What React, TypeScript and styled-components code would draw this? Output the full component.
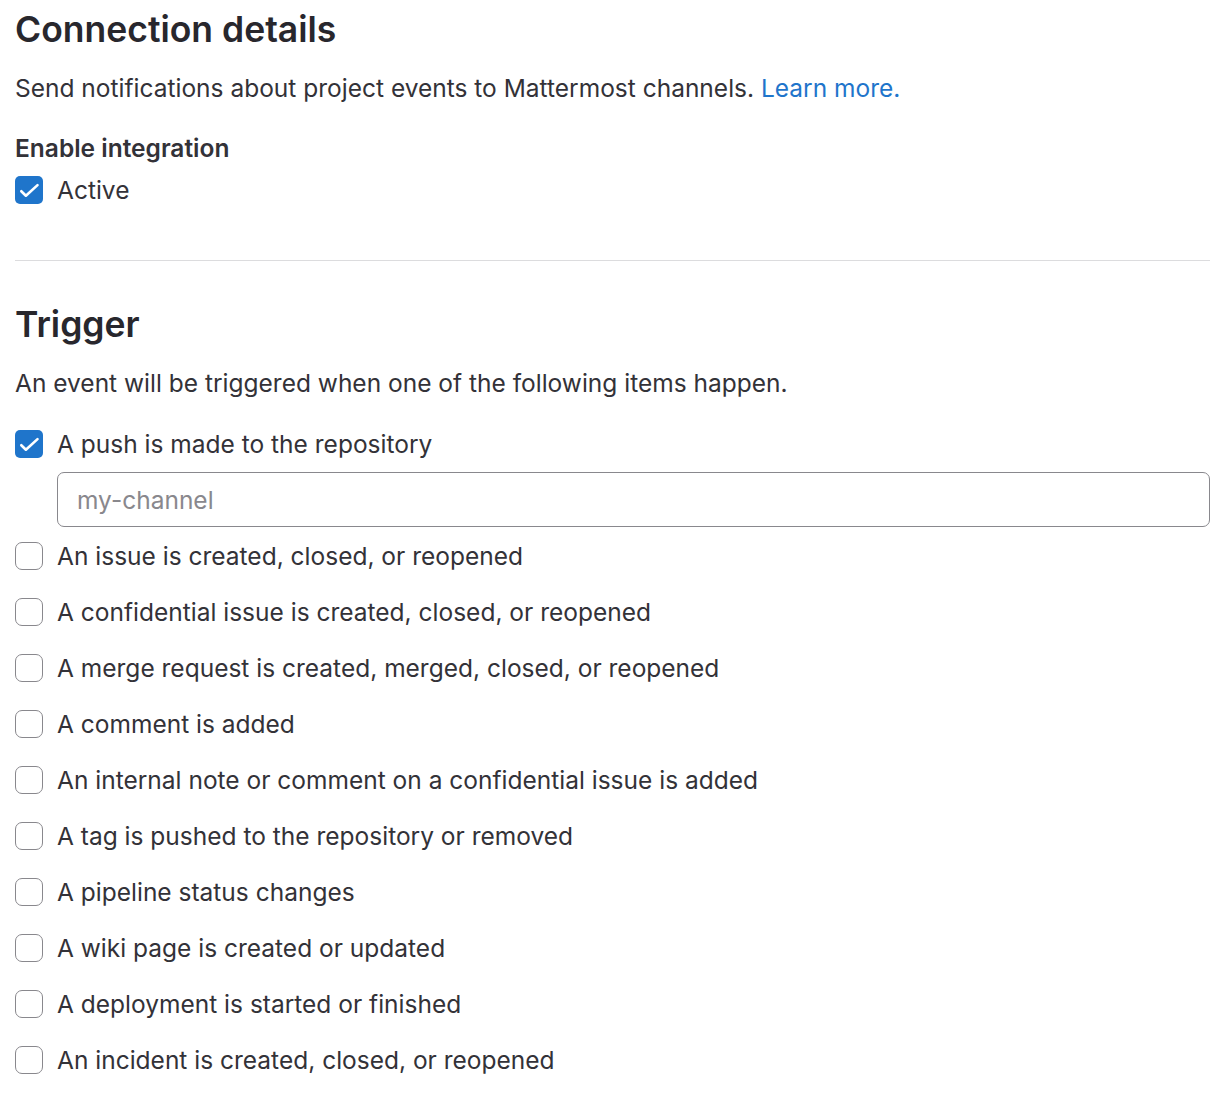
import React, {useState} from 'react'
import styled, {createGlobalStyle} from 'styled-components'

const Global = createGlobalStyle`
body {
    margin: 0;
    background: #ffffff;
    font-family: Inter, "Noto Sans", "Liberation Sans", sans-serif;
    color: #333238;
}
`

const triggers = [
    'An issue is created, closed, or reopened',
    'A confidential issue is created, closed, or reopened',
    'A merge request is created, merged, closed, or reopened',
    'A comment is added',
    'An internal note or comment on a confidential issue is added',
    'A tag is pushed to the repository or removed',
    'A pipeline status changes',
    'A wiki page is created or updated',
    'A deployment is started or finished',
    'An incident is created, closed, or reopened',
]

const Check = ({checked}: {checked: boolean}) => (
    <Box $checked={checked}>
        {checked && (
            <svg width="28" height="28" viewBox="0 0 28 28">
                <path d="M6.3 15.2l4.6 4.5 11.6-10.6" fill="none" stroke="#fff" strokeWidth="2.6" strokeLinecap="round" strokeLinejoin="round" />
            </svg>
        )}
    </Box>
)

const CheckRow = ({label, initial}: {label: string, initial?: boolean}) => {
    const [on, setOn] = useState(!!initial)
    return (
        <Row onClick={() => setOn(!on)}>
            <Check checked={on} />
            <Label>{label}</Label>
        </Row>
    )
}

const App = () => {
    const [channel, setChannel] = useState('')

    return (
        <Page>
            <Global />
            <Heading>Connection details</Heading>
            <Text>
                Send notifications about project events to Mattermost channels. <Link href="#">Learn more.</Link>
            </Text>
            <GroupLabel>Enable integration</GroupLabel>
            <CheckRow label="Active" initial />
            <Divider />
            <Heading $top={41}>Trigger</Heading>
            <Text>An event will be triggered when one of the following items happen.</Text>
            <List>
                <CheckRow label="A push is made to the repository" initial />
                <Input value={channel} onChange={(e) => setChannel(e.target.value)} placeholder="my-channel" />
                {triggers.map((t) => (
                    <CheckRow key={t} label={t} />
                ))}
            </List>
        </Page>
    )
}

export default App

const Page = styled.div`
padding: 7px 17px 20px 15px;
`

const Heading = styled.h2<{$top?: number}>`
margin: ${(p) => p.$top || 0}px 0 0 0;
font-size: 35.5px;
line-height: 45px;
font-weight: 600;
color: #28272d;
`

const Text = styled.p`
margin: 18px 0 0 0;
font-size: 24.5px;
line-height: 36.75px;
`

const Link = styled.a`
color: #1f75cb;
text-decoration: none;
`

const GroupLabel = styled.div`
margin-top: 23px;
font-size: 24.5px;
line-height: 36.75px;
font-weight: 600;
`

const Row = styled.label`
display: flex;
align-items: center;
gap: 14px;
height: 42px;
margin-top: 2px;
cursor: pointer;
`

const Box = styled.span<{$checked: boolean}>`
box-sizing: border-box;
width: 28px;
height: 28px;
flex-shrink: 0;
display: flex;
align-items: center;
justify-content: center;
border-radius: ${(p) => (p.$checked ? 5 : 7)}px;
background: ${(p) => (p.$checked ? '#1f75cb' : '#ffffff')};
border: ${(p) => (p.$checked ? 'none' : '1.75px solid #89888d')};
`

const Label = styled.span`
font-size: 24.5px;
line-height: 42px;
`

const Divider = styled.hr`
margin: 49px 0 0 0;
border: none;
border-top: 1.5px solid #dcdcde;
`

const List = styled.div`
margin-top: 20px;
display: flex;
flex-direction: column;

& > label + label {
    margin-top: 14px;
}
& > input + label {
    margin-top: 8px;
}
`

const Input = styled.input`
box-sizing: border-box;
margin: 7px 0 0 42px;
height: 55px;
padding: 0 19px;
border: 1.75px solid #89888d;
border-radius: 7px;
font-family: inherit;
font-size: 24.5px;
color: #333238;
outline: none;

&::placeholder {
    color: #89888d;
}
`
